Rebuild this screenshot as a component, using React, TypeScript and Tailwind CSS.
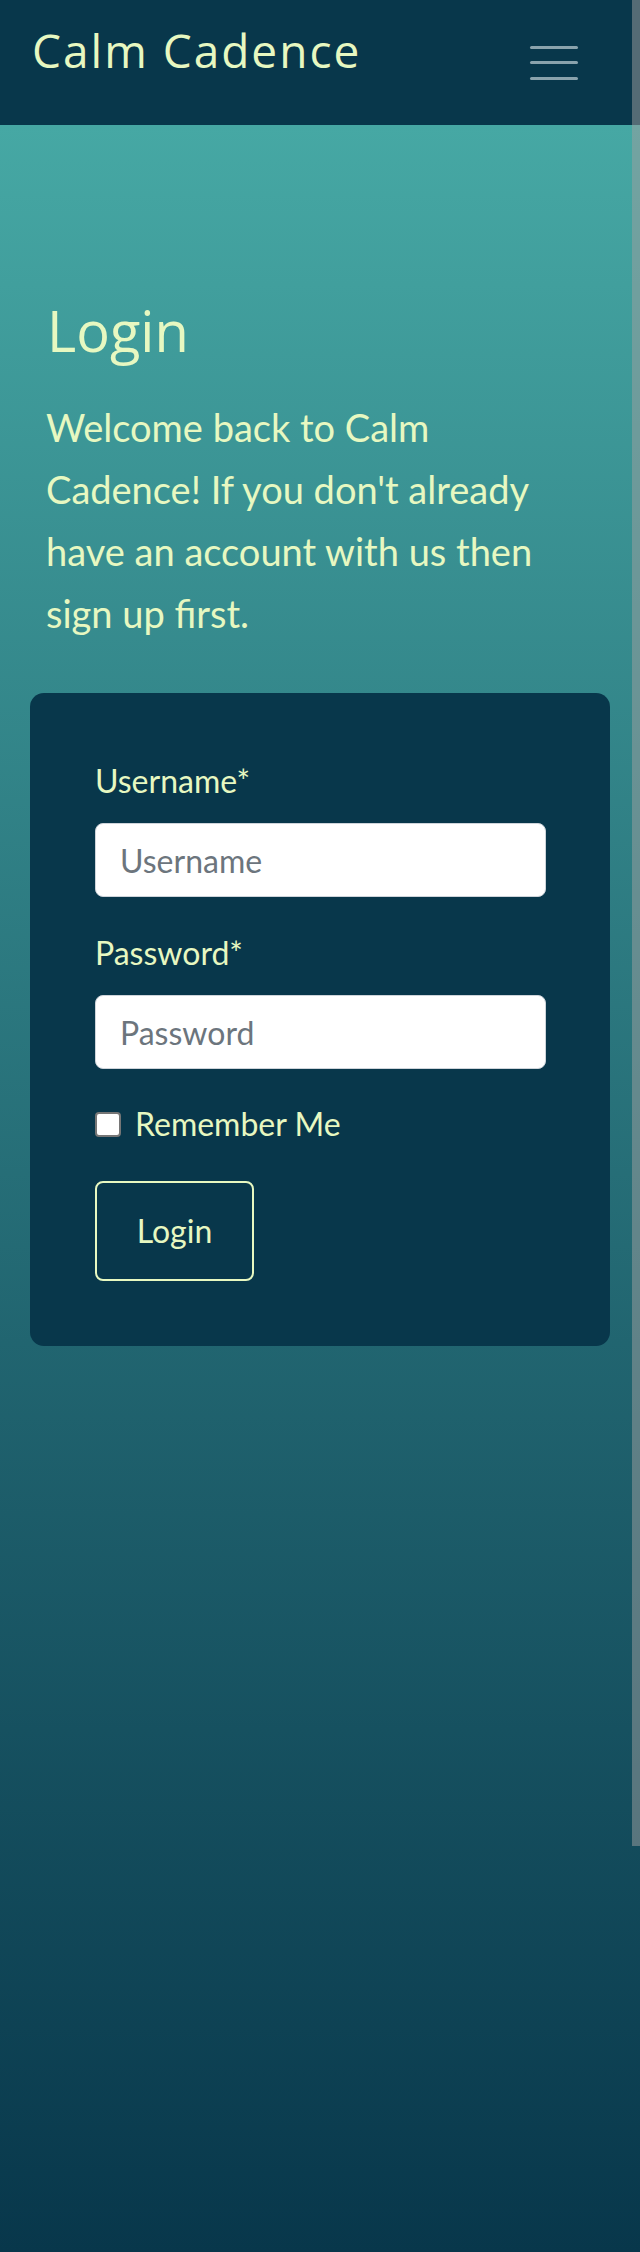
import React from 'react';

const cream = 'text-[#e7f8c1]';

function Navbar() {
  return (
    <nav className="h-[125px] bg-[#08374b] flex items-center justify-between pl-[32px] pr-[62px]">
      <span className={`self-start mt-[27px] ${cream} text-[46px] leading-none tracking-[2px] font-['Open_Sans',sans-serif]`}>
        Calm Cadence
      </span>
      <button aria-label="Toggle navigation" className="w-[48px] h-[36px] flex flex-col justify-between py-[1px]">
        <span className="block h-[3px] w-full rounded-full bg-[#8aa3ad]" />
        <span className="block h-[3px] w-full rounded-full bg-[#8aa3ad]" />
        <span className="block h-[3px] w-full rounded-full bg-[#8aa3ad]" />
      </button>
    </nav>
  );
}

function Field({ label, type, placeholder }: { label: string; type: string; placeholder: string }) {
  return (
    <div className="mb-[32px]">
      <label className={`block ${cream} text-[32px] leading-[1.5] mb-[18px]`}>{label}*</label>
      <input
        type={type}
        placeholder={placeholder}
        className="w-full h-[74px] bg-white border border-[#ced4da] rounded-[8px] px-[24px] text-[32px] text-[#212529] placeholder:text-[#6c757d] outline-none"
      />
    </div>
  );
}

export default function App() {
  return (
    <div className="relative min-h-[2252px] bg-gradient-to-b from-[#08374b] from-[125px] via-[#46a8a4] via-[125px] to-[#08374b] font-['Lato',sans-serif]">
      <Navbar />

      <main className="pt-[172px]">
        <section className="pl-[46px] pr-[84px]">
          <h1 className={`${cream} text-[56px] leading-[1.2] font-['Open_Sans',sans-serif] ml-[1px]`}>Login</h1>
          <p className={`${cream} text-[38px] leading-[62px] mt-[32px]`}>
            Welcome back to Calm Cadence! If you don't already have an account with us then sign up first.
          </p>
        </section>

        <div className="mx-[30px] mt-[49px] bg-[#08374b] rounded-[14px] pt-[64px] pb-[65px] pl-[65px] pr-[64px]">
          <form>
            <Field label="Username" type="text" placeholder="Username" />
            <Field label="Password" type="password" placeholder="Password" />

            <label className="flex items-center gap-[14px] -mt-[1px]">
              <input
                type="checkbox"
                className="appearance-none w-[26px] h-[25px] bg-white border-2 border-[#767676] rounded-[4px]"
              />
              <span className={`${cream} text-[32px] leading-[1.5]`}>Remember Me</span>
            </label>

            <button
              type="button"
              className={`mt-[33px] w-[159px] h-[100px] border-2 border-[#e7f8c1] rounded-[8px] ${cream} text-[32px]`}
            >
              Login
            </button>
          </form>
        </div>
      </main>

      <div className="absolute right-0 top-0 w-[8px] h-[1846px] bg-[#a0a0a0]/50" />
    </div>
  );
}
